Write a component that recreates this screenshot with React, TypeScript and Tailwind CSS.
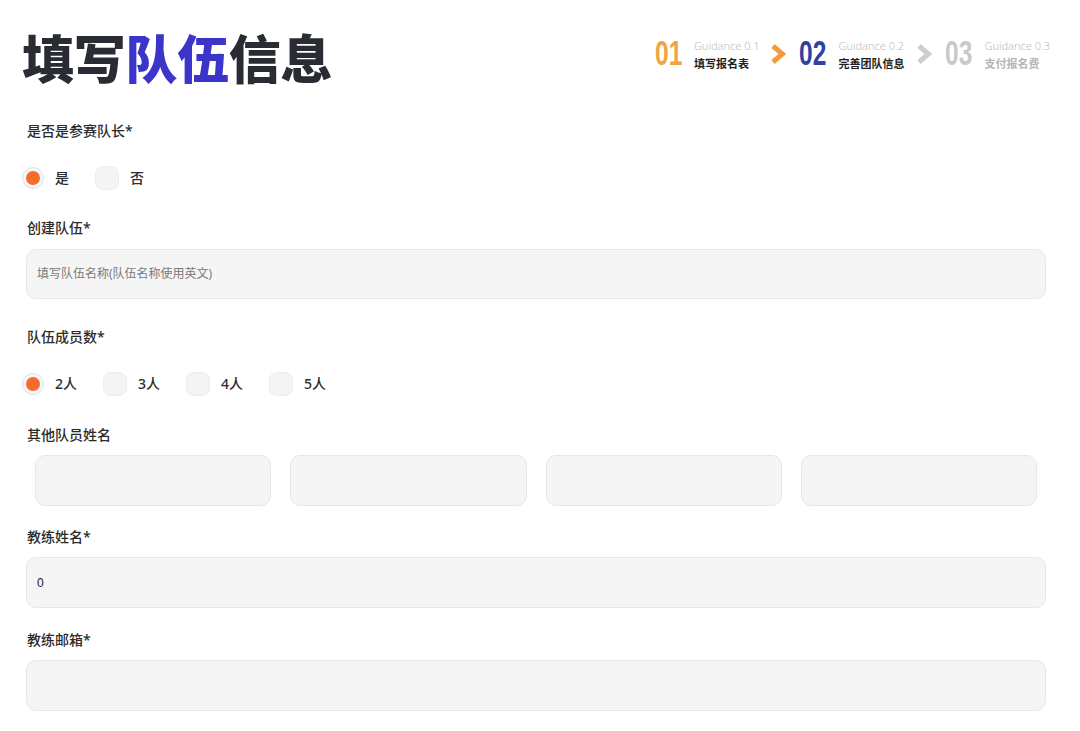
import React from 'react';

const cjk = { fontFamily: '"Noto Sans", "Noto Sans CJK SC", sans-serif' };

function Chevron({ color }: { color: string }) {
  return (
    <svg width="16" height="22" viewBox="0 0 16 22" className="shrink-0">
      <polyline
        points="3,3 12.5,11 3,19"
        fill="none"
        stroke={color}
        strokeWidth="5"
        strokeLinejoin="miter"
      />
    </svg>
  );
}

type Step = { no: string; noColor: string; sub: string; title: string; titleColor: string };

const steps: Step[] = [
  { no: '01', noColor: 'text-[#f0a540]', sub: 'Guidance 0.1', title: '填写报名表', titleColor: 'text-[#1f1f1f]' },
  { no: '02', noColor: 'text-[#2f42a3]', sub: 'Guidance 0.2', title: '完善团队信息', titleColor: 'text-[#1f1f1f]' },
  { no: '03', noColor: 'text-[#c9c9c9]', sub: 'Guidance 0.3', title: '支付报名费', titleColor: 'text-[#b5b5b5]' },
];

function StepItem({ s }: { s: Step }) {
  return (
    <div className="flex items-start gap-[12px]">
      {/* no condensed face installed, so squeeze the digits */}
      <span className="w-[27px] h-[30px] overflow-visible block">
        <span
          className={`${s.noColor} inline-block origin-top-left scale-x-[0.7] text-[35px] leading-[34px] font-bold mt-[-3px] whitespace-nowrap`}
          style={{ fontFamily: '"Liberation Sans", sans-serif' }}
        >
          {s.no}
        </span>
      </span>
      <div className="flex flex-col">
        <span className="text-[11px] leading-[14px] font-light text-[#bdbdbd]" style={cjk}>
          {s.sub}
        </span>
        <span className={`text-[11px] leading-[14px] font-bold mt-[4px] ${s.titleColor}`} style={cjk}>
          {s.title}
        </span>
      </div>
    </div>
  );
}

function Radio({ label, checked, first }: { label: string; checked?: boolean; first?: boolean }) {
  return (
    <div className={`flex items-center ${first ? '' : 'ml-[26px]'}`}>
      {checked ? (
        <span className="w-[22px] h-[22px] rounded-full border border-[#dfe4ea] bg-[#f4f6f8] flex items-center justify-center">
          <span className="w-[14px] h-[14px] rounded-full bg-[#f46c2c]" />
        </span>
      ) : (
        <span className="w-[24px] h-[24px] rounded-[8px] border border-[#ececec] bg-[#f4f4f4]" />
      )}
      <span className="ml-[11px] text-[14px] font-medium text-[#2e2e2e] leading-5" style={cjk}>
        {label}
      </span>
    </div>
  );
}

function Label({ text, className = '' }: { text: string; className?: string }) {
  return (
    <div className={`h-5 leading-5 text-[14px] font-medium text-[#2b2b2b] pl-[1px] ${className}`} style={cjk}>
      {text}
    </div>
  );
}

function Field({ h = 'h-[51px]', children }: { h?: string; children?: React.ReactNode }) {
  return (
    <div className={`${h} w-full rounded-[10px] border border-[#e7e7e7] bg-[#f5f5f5] flex items-center px-[10px]`}>
      {children}
    </div>
  );
}

export default function App() {
  return (
    <div className="w-[1080px] h-[731px] bg-white overflow-hidden relative" style={cjk}>
      <div className="flex justify-between items-start pl-[22px] pr-[30px] pt-[27px]">
        <h1
          className="text-[52px] leading-[60px] font-black text-[#2a2c34] tracking-[-0.3px]"
          style={{ fontFamily: '"Noto Sans CJK SC", sans-serif' }}
        >
          填写<span className="text-[#3b36c9]">队伍</span>信息
        </h1>
        <div className="flex items-start mt-[12px]">
          <StepItem s={steps[0]} />
          <div className="ml-[11px] mr-[13px] mt-[4px]">
            <Chevron color="#f39a3c" />
          </div>
          <StepItem s={steps[1]} />
          <div className="ml-[12px] mr-[13px] mt-[4px]">
            <Chevron color="#cdcdcd" />
          </div>
          <StepItem s={steps[2]} />
        </div>
      </div>

      <div className="pl-[26px] pr-[34px] flex flex-col mt-[34px]">
        <Label text="是否是参赛队长*" />
        <div className="flex items-center mt-[25px] h-6 -ml-[4px]">
          <Radio label="是" checked first />
          <Radio label="否" />
        </div>

        <Label text="创建队伍*" className="mt-[28px]" />
        <div className="mt-[11px]">
          <Field h="h-[50px]">
            <span className="text-[12px] text-[#7a7a7a]" style={cjk}>
              填写队伍名称(队伍名称使用英文)
            </span>
          </Field>
        </div>

        <Label text="队伍成员数*" className="mt-[28px]" />
        <div className="flex items-center mt-[25px] h-6 -ml-[4px]">
          <Radio label="2人" checked first />
          <Radio label="3人" />
          <Radio label="4人" />
          <Radio label="5人" />
        </div>

        <Label text="其他队员姓名" className="mt-[29px]" />
        <div className="grid grid-cols-4 gap-[19px] mt-[10px] px-[9px]">
          <Field />
          <Field />
          <Field />
          <Field />
        </div>

        <Label text="教练姓名*" className="mt-[21px]" />
        <div className="mt-[10px]">
          <Field>
            <span className="text-[12px] text-[#222]" style={{ fontFamily: '"Liberation Sans", sans-serif' }}>
              0
            </span>
          </Field>
        </div>

        <Label text="教练邮箱*" className="mt-[22px]" />
        <div className="mt-[10px]">
          <Field />
        </div>
      </div>
    </div>
  );
}
